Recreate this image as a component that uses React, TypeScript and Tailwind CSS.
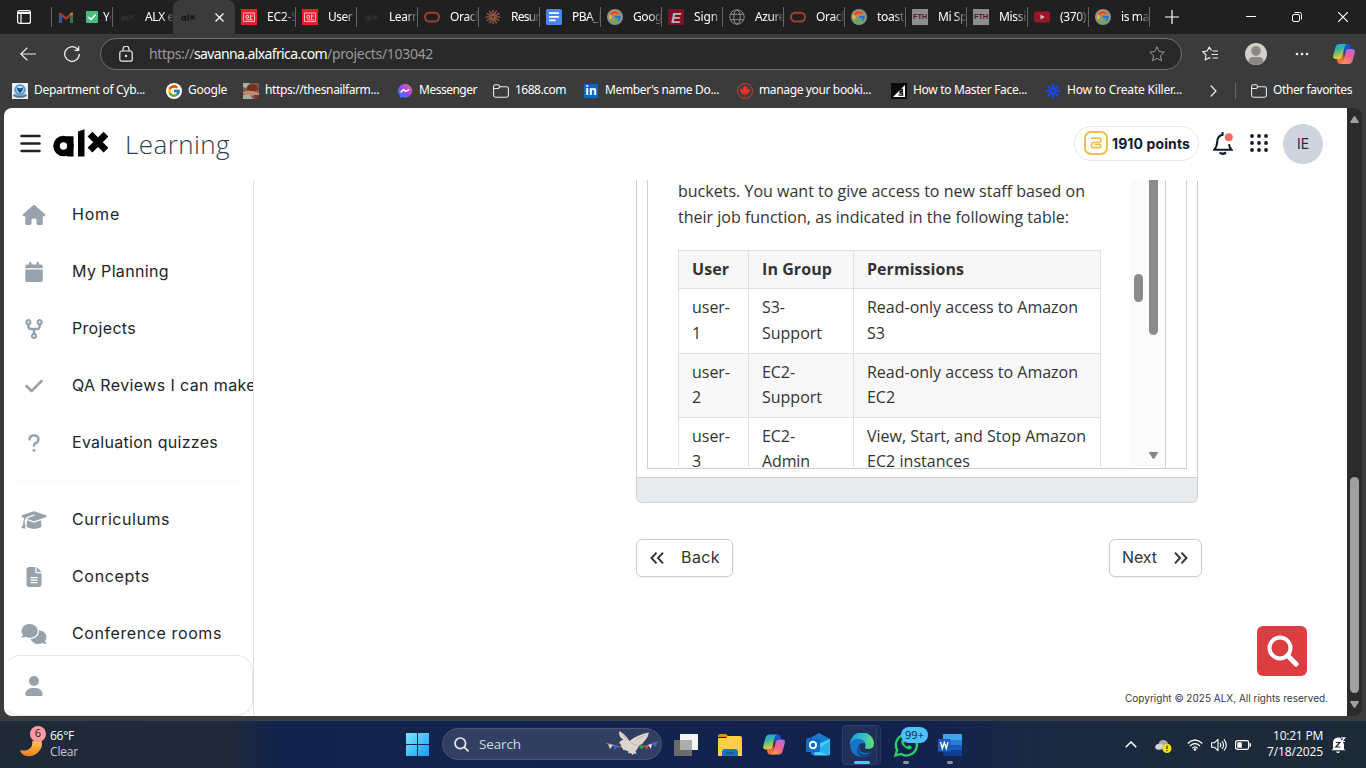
import { useLayoutEffect, useRef, type ReactNode } from "react";
import {
  FaHouse, FaCalendar, FaCodeFork, FaCheck, FaQuestion, FaGraduationCap,
  FaFileLines, FaComments, FaUser,
} from "react-icons/fa6";
import { FcGoogle } from "react-icons/fc";
import { FaCanadianMapleLeaf } from "react-icons/fa";

/* One line of text whose tracking is adjusted so that it spans `w` pixels. */
function Line({ w, className = "", children }: { w: number; className?: string; children: string }) {
  const ref = useRef<HTMLSpanElement>(null);
  useLayoutEffect(() => {
    const el = ref.current;
    if (!el) return;
    el.style.letterSpacing = "0px";
    const natural = el.getBoundingClientRect().width;
    el.style.letterSpacing = `${(w - natural) / children.length}px`;
  }, [w, children]);
  return <span ref={ref} className={`inline-block shrink-0 whitespace-pre ${className}`}>{children}</span>;
}

/* ---------- small drawings ---------- */

function AlxMark({ className = "" }: { className?: string }) {
  return (
    <svg viewBox="0 0 55 28" className={className} fill="none" stroke="currentColor">
      <circle cx="10.5" cy="17" r="7" strokeWidth="6.6" />
      <path d="M17.3 7.3v20.3" strokeWidth="6.4" />
      <path d="M25 2.5 31.5.3v27.3H25z" fill="currentColor" stroke="none" />
      <path d="m37 5.200 16 16M53 5.200l-16 16" strokeWidth="6.8" />
    </svg>
  );
}

const Oracle = () => (
  <svg viewBox="0 0 16 16" className="size-4"><rect x="1" y="3.7" width="14" height="8.8" rx="4.4" fill="none" stroke="#9a4236" strokeWidth="2" /></svg>
);
const Board = () => (
  <svg viewBox="0 0 16 16" className="size-4">
    <rect width="16" height="16" fill="#e0222e" />
    <path d="M2.500 4h11v8.500h-11zM5 6.500h2.500V9H5zM9.500 5.500v5M9.500 7H12M5 10.800h7" fill="none" stroke="#ffb9bd" strokeWidth="1" />
  </svg>
);
const Burst = ({ className = "text-[#9c5a42]", n = 12, sw = 1.3 }: { className?: string; n?: number; sw?: number }) => (
  <svg viewBox="0 0 16 16" className={`size-4 ${className}`} stroke="currentColor" strokeWidth={sw}>
    {Array.from({ length: n }, (_, i) => (
      <path key={i} d="M8 7V.7" transform={`rotate(${(i * 360) / n} 8 8)`} />
    ))}
  </svg>
);
const Docs = () => (
  <svg viewBox="0 0 16 16" className="size-4">
    <rect width="16" height="16" rx="1.5" fill="#4486f4" />
    <path d="M3 4.2h10M3 7.8h10M3 11.4h6.5" stroke="#fff" strokeWidth="1.7" />
  </svg>
);
const GoogleTab = () => (
  <span className="flex size-4 items-center justify-center rounded-full bg-[#8f8f8f]"><FcGoogle className="size-3.5" /></span>
);
const ETab = () => (
  <span className="flex size-4 items-center justify-center bg-[#7c1128] font-['Liberation_Sans'] text-[15px] leading-none font-bold text-[#b9b3b4] italic">E</span>
);
const Globe = () => (
  <svg viewBox="0 0 16 16" className="size-4" fill="none" stroke="#8d8d8d">
    <circle cx="8" cy="8" r="7.2" /><ellipse cx="8" cy="8" rx="3.2" ry="7.2" /><path d="M1.5 5.3h13M1.5 10.7h13" />
  </svg>
);
const Fth = () => (
  <span className="flex size-4 items-center justify-center bg-[#8e8e8e] font-['Liberation_Sans'] text-[7.500px] leading-none font-bold tracking-tight text-[#5c1420]">FTH</span>
);
const Youtube = () => (
  <svg viewBox="0 0 16 16" className="size-4"><rect y="2.5" width="16" height="11" rx="2.5" fill="#9c1528" /><path d="M6.5 5.5v5L10.7 8z" fill="#c8c8c8" /></svg>
);
const Gmail = () => (
  <svg viewBox="0 0 14 11" className="h-[11px] w-[14px]">
    <path d="M0 2v9h3V5z" fill="#2f5c9c" /><path d="M14 2v9h-3V5z" fill="#2c7d43" />
    <path d="M0 .8h2L7 5l5-4.200h2v2L7 8 0 2.800z" fill="#a13a32" /><path d="M11 3.500V.8h3v2z" fill="#ad862c" />
  </svg>
);
const CheckBox = () => (
  <svg viewBox="0 0 12 12" className="size-3"><rect width="12" height="12" rx="1" fill="#45c07c" /><path d="m2.500 6 2.500 2.600 4.700-5" stroke="#fff" strokeWidth="1.500" fill="none" /></svg>
);
const Folder = () => (
  <svg viewBox="0 0 16 16" className="size-4" fill="none" stroke="#e8e8e8" strokeWidth="1.1">
    <path d="M.6 3.600A1.900 1.900 0 0 1 2.500 1.700h2.700l2 2h6.300a1.900 1.900 0 0 1 1.900 1.900v6.700a1.900 1.900 0 0 1-1.900 1.900h-11a1.900 1.900 0 0 1-1.900-1.900zM.6 5.500h4.800l1.800-1.800" />
  </svg>
);
const Messenger = () => (
  <svg viewBox="0 0 16 16" className="size-4">
    <defs><linearGradient id="msg" x1="0" y1="1" x2="1" y2="0"><stop stopColor="#0b8bff" /><stop offset=".5" stopColor="#9b45fb" /><stop offset="1" stopColor="#ff6a70" /></linearGradient></defs>
    <path d="M8 1a7 6.800 0 0 0-5.200 11.400v2.400l2.300-.9A7 6.800 0 1 0 8 1z" fill="url(#msg)" />
    <path d="m3.700 9.500 2.700-2.900 2.300 1.800 3.300-1.800" fill="none" stroke="#fff" strokeWidth="1.500" />
  </svg>
);
const Crest = () => (
  <svg viewBox="0 0 16 16" className="size-4">
    <rect width="16" height="16" fill="#e8eff5" /><circle cx="8" cy="7" r="5.800" fill="#5a9bd0" /><circle cx="8" cy="6.500" r="3.600" fill="#cfe2f1" />
    <path d="M5 4.500q3 1.500 6 0 0 4-3 5.500-3-1.500-3-5.500z" fill="#1c4f8c" /><path d="M1.500 12q6.500 3.500 13 0" stroke="#5b6f86" strokeWidth="2" fill="none" />
  </svg>
);
const Snail = () => (
  <svg viewBox="0 0 16 16" className="size-4">
    <rect width="16" height="16" fill="#7b5a4a" /><path d="M0 0h7L3 5 0 4z" fill="#9fb0a5" /><ellipse cx="9.500" cy="5" rx="5.500" ry="3.500" fill="#7a2f1d" />
    <path d="M0 9q7-3 16 1v2Q8 14 0 11z" fill="#c08a72" /><path d="M0 12h7l3 4H0z" fill="#a9aba0" /><path d="M11 12h5v4h-4z" fill="#6d3b2c" />
  </svg>
);
const Maple = () => (
  <span className="flex size-4 items-center justify-center rounded-full border border-[#d23a30]"><FaCanadianMapleLeaf className="size-3 text-[#f0322a]" /></span>
);
const Sail = () => (
  <svg viewBox="0 0 16 16" className="size-4"><rect width="16" height="16" fill="#0a0a0a" /><path d="M14 2v12H2z" fill="#fff" /><path d="M8 6.500h3.300v2H9v1.700h2.600v2H7.500" stroke="#0a0a0a" fill="none" strokeWidth="1.300" /></svg>
);

function Copilot({ id, className }: { id: string; className: string }) {
  return (
    <svg viewBox="0 0 22 20" className={className}>
      <defs>
        <linearGradient id={id + "a"} x1="0" y1="0" x2=".3" y2="1"><stop stopColor="#1ea0f5" /><stop offset=".45" stopColor="#37b5a0" /><stop offset="1" stopColor="#f7d021" /></linearGradient>
        <linearGradient id={id + "b"} x1=".8" y1="0" x2=".2" y2="1"><stop stopColor="#b06cf2" /><stop offset=".5" stopColor="#f0608c" /><stop offset="1" stopColor="#ff9a4a" /></linearGradient>
      </defs>
      <path d="M11 0h4q1.800 0 2.500 2l.8 3h-3q-2 0-2.700 2l-1 4z" fill="#1553d0" />
      <path d="M6.500 0H14q-1.600.4-2.200 2.500L9.300 12.500Q8.700 15 6.500 15H3Q-.5 15 .2 11.500L2.500 3Q3.500 0 6.500 0z" fill={`url(#${id}a)`} />
      <path d="M11 20H7q-1.800 0-2.500-2l-.8-3h3q2 0 2.700-2l1-4z" fill="#f7704c" />
      <path d="M15.500 20H8q1.600-.4 2.200-2.500L12.700 7.500q.6-2.500 2.800-2.500H19q3.500 0 2.800 3.500L19.500 17q-1 3-4 3z" fill={`url(#${id}b)`} />
    </svg>
  );
}

/* ---------- browser chrome ---------- */

const alxDim = <AlxMark className="mt-px h-[7px] w-[13px] text-[#303030]" />;
const tabs: { icon: ReactNode; text: string; w: number }[] = [
  { icon: <Board />, text: "EC2-S", w: 31 },
  { icon: <Board />, text: "User ", w: 27 },
  { icon: alxDim, text: "Learn", w: 30 },
  { icon: <Oracle />, text: "Oracl", w: 28 },
  { icon: <Burst />, text: "Resum", w: 35 },
  { icon: <Docs />, text: "PBA_L", w: 32 },
  { icon: <GoogleTab />, text: "Goog", w: 29 },
  { icon: <ETab />, text: "Sign i", w: 30 },
  { icon: <Globe />, text: "Azure", w: 30 },
  { icon: <Oracle />, text: "Oracl", w: 28 },
  { icon: <GoogleTab />, text: "toast", w: 27 },
  { icon: <Fth />, text: "Mi Sp", w: 29 },
  { icon: <Fth />, text: "Missi", w: 27 },
  { icon: <Youtube />, text: "(370)", w: 26 },
  { icon: <GoogleTab />, text: "is mak", w: 34 },
];

const fade = "overflow-hidden [mask-image:linear-gradient(to_right,black_60%,transparent_105%)]";

function TabStrip() {
  return (
    <div className="flex h-[34px] items-center bg-[#202020] text-[12px] text-white">
      <div className="flex w-[51px] justify-end pr-5">
        <svg viewBox="0 0 14 14" className="size-3.5" fill="none" stroke="#fff" strokeWidth="1.200">
          <rect x=".6" y=".6" width="12.800" height="12.800" rx="2" /><path d="M1 3h12" strokeWidth="2" /><path d="M4 3v10" />
        </svg>
      </div>
      <div className="flex h-5 w-[62px] items-center border-x border-[#666] pl-[7px]">
        <Gmail />
        <span className="mr-[5px] ml-[13px]"><CheckBox /></span>
        <span className={`w-2 ${fade}`}><Line w={14}>Yo</Line></span>
      </div>
      <div className="flex h-5 w-[60px] items-center pl-2">
        {alxDim}
        <span className={`ml-[11px] w-7 ${fade}`}><Line w={29}>ALX e</Line></span>
      </div>
      <div className="flex h-[34px] w-[62px] items-center rounded-t-lg bg-[#3b3b3b] pl-2">
        <AlxMark className="h-[7px] w-[14px] text-[#151b1b]" />
        <svg viewBox="0 0 9 9" className="ml-5 size-[9px]" stroke="#fff" strokeWidth="1.200"><path d="m.5.5 8 8M8.500.5l-8 8" /></svg>
      </div>
      {tabs.map((t, i) => (
        <div key={i} className="flex h-5 w-[61px] items-center border-r border-[#666] pl-1.5">
          <span className="flex w-4 justify-center">{t.icon}</span>
          <span className={`ml-2.5 w-7 ${fade}`}><Line w={t.w}>{t.text}</Line></span>
        </div>
      ))}
      <svg viewBox="0 0 14 14" className="ml-[15px] size-3.5" stroke="#fff" strokeWidth="1.200"><path d="M7 0v14M0 7h14" /></svg>
      <svg viewBox="0 0 10 10" className="ml-[67px] size-2.5" stroke="#fff"><path d="M0 4.500h10" /></svg>
      <svg viewBox="0 0 10 10" className="ml-9 size-2.5" stroke="#fff" fill="none"><rect x=".5" y="2.500" width="7" height="7" rx="1.500" /><path d="M2.500.5h5a2 2 0 0 1 2 2v5" /></svg>
      <svg viewBox="0 0 10 10" className="ml-9 size-2.5" stroke="#fff" strokeWidth="1.200"><path d="m0 0 10 10M10 0 0 10" /></svg>
    </div>
  );
}

function Toolbar() {
  return (
    <div className="flex h-10 items-center pl-5">
      <svg viewBox="0 0 16 14" className="h-3.5 w-4" fill="none" stroke="#eee" strokeWidth="1.200"><path d="M16 7H1M7.300.7.800 7l6.500 6.300" /></svg>
      <svg viewBox="0 0 16 16" className="ml-7 size-4" fill="none" stroke="#eee" strokeWidth="1.300"><path d="M15.300 8a7.300 7.300 0 1 1-2.500-5.500l1.700 1.700M14.600.3v4h-4" /></svg>
      <div className="ml-5 flex h-8 w-[1082px] items-center rounded-full border border-[#6e6e6e] bg-[#292929] pr-4 pl-[18px]">
        <svg viewBox="0 0 14 16" className="h-4 w-3.5" fill="none" stroke="#eee" strokeWidth="1.200"><rect x=".8" y="5" width="12.400" height="10.200" rx="2" /><path d="M4 5V3.200a3 3 0 0 1 6 0V5" /><circle cx="7" cy="10" r=".6" fill="#eee" /></svg>
        <span className="ml-4 flex pb-px text-[14px] text-[#999]">
          <Line w={45}>https://</Line><Line w={133} className="text-white">savanna.alxafrica.com</Line><Line w={106}>/projects/103042</Line>
        </span>
        <svg viewBox="0 0 16 16" className="ml-auto size-4" fill="none" stroke="#999"><path d="m8 .8 2.200 4.700 5 .7-3.700 3.500 1 5.100L8 12.300l-4.500 2.500 1-5.100L.8 6.200l5-.7z" strokeLinejoin="round" /></svg>
      </div>
      <svg viewBox="0 0 16 16" className="ml-5 size-4" fill="none" stroke="#eee" strokeWidth="1.200"><path d="M9.500 4.500 7.300 1 5.200 5 .8 5.700l3.200 3.300-.8 5 4-2.200 1.200.6M10.500 5H16M9.500 8.500H16M10.500 12H16" strokeLinejoin="round" /></svg>
      <svg viewBox="0 0 22 22" className="ml-[27px] size-[22px]"><circle cx="11" cy="11" r="11" fill="#d2cfcb" /><circle cx="11" cy="8" r="4.800" fill="#8c8985" /><path d="M3.500 18.500Q4 14 8 14h6q4 0 4.500 4.500-3 3.500-7.500 3.500t-7.500-3.500z" fill="#8c8985" /></svg>
      <svg viewBox="0 0 14 4" className="ml-7 h-1 w-3.5" fill="#eee"><circle cx="2" cy="2" r="1.300" /><circle cx="7" cy="2" r="1.300" /><circle cx="12" cy="2" r="1.300" /></svg>
      <Copilot id="tb" className="ml-6 h-5 w-[22px]" />
    </div>
  );
}

const bookmarks: { icon: ReactNode; text: string; w: number; box: string }[] = [
  { icon: <Crest />, text: "Department of Cyb...", w: 111, box: "w-[154px]" },
  { icon: <span className="flex size-4 items-center justify-center rounded-full bg-white"><FcGoogle className="size-3.5" /></span>, text: "Google", w: 39, box: "w-[77px]" },
  { icon: <Snail />, text: "https://thesnailfarm...", w: 114, box: "w-[154px]" },
  { icon: <Messenger />, text: "Messenger", w: 58, box: "w-[96px]" },
  { icon: <Folder />, text: "1688.com", w: 51, box: "w-[90px]" },
  { icon: <span className="flex size-3.5 items-center justify-center bg-[#0a66c2] text-[12px] leading-none font-bold">in</span>, text: "Member's name Do...", w: 114, box: "w-[154px]" },
  { icon: <Maple />, text: "manage your booki...", w: 112, box: "w-[154px]" },
  { icon: <Sail />, text: "How to Master Face...", w: 114, box: "w-[154px]" },
  { icon: <Burst className="text-[#1c46e0]" n={8} sw={2.3} />, text: "How to Create Killer...", w: 115, box: "w-[165px]" },
];

function Bookmarks() {
  return (
    <div className="flex h-[34px] items-center pl-3 text-[12px] text-white">
      {bookmarks.map((b) => (
        <div key={b.text} className={`flex shrink-0 items-center gap-1.5 ${b.box}`}>
          <span className="flex w-4 justify-center">{b.icon}</span><Line w={b.w} className="pb-0.5">{b.text}</Line>
        </div>
      ))}
      <svg viewBox="0 0 7 12" className="h-3 w-[7px]" fill="none" stroke="#eee" strokeWidth="1.200"><path d="m.7.5 5.300 5.500L.7 11.500" /></svg>
      <div className="mr-[15px] ml-[18px] h-4 w-px bg-[#666]" />
      <Folder />
      <Line w={79} className="ml-1.5 pb-0.5">Other favorites</Line>
    </div>
  );
}

/* ---------- page ---------- */

function Header() {
  return (
    <header className="flex h-[72px] shrink-0 items-center pb-0.5 pl-4">
      <svg viewBox="0 0 21 19" className="h-[19px] w-[21px]" stroke="#1f2328" strokeWidth="2.500" strokeLinecap="round"><path d="M1.500 2h18M1.500 9.500h18M1.500 17h18" /></svg>
      <AlxMark className="ml-3 h-7 w-[55px] text-black" />
      <Line w={105} className="mt-0.5 ml-[17px] font-['Open_Sans'] text-[26px] font-light text-[#2f3d54]">Learning</Line>
      <div className="ml-auto flex h-[35px] w-[125px] items-center rounded-full border border-[#e5e7ea] pl-[9px] text-[#0f1b2d]">
        <svg viewBox="0 0 24 24" className="size-6" fill="none" stroke="#f5bc45"><rect x="1" y="1" width="22" height="22" rx="6" strokeWidth="2" /><path d="M7 7.200h8.500q1.200 0 1.200 1.200v1.800q0 1.300-1.300 1.300H9q-1.500 0-1.500 1.500v2.300q0 1.400 1.400 1.400h6.400q1.400 0 1.400-1.400v-.9q0-.9-.9-.9H10.500" strokeWidth="1.700" strokeLinejoin="round" /></svg>
        <Line w={78} className="ml-1 font-['Inter'] text-[14px] font-bold">1910 points</Line>
      </div>
      <svg viewBox="0 0 20 23" className="ml-3.5 h-[23px] w-5" fill="none" stroke="#0f1b2d" strokeWidth="2"><path d="M10.500 2.800Q4.800 3 4.300 9q-.2 5.500-3 8.700h17.200q-2-2.200-2.600-5.500" /><path d="M6.500 20.500q3.200 2.500 6.500 0" strokeWidth="2.200" /><path d="M9.500 0v2.500" /><circle cx="15.800" cy="5.200" r="4" fill="#ff6b5e" stroke="none" /></svg>
      <svg viewBox="0 0 18 18" className="ml-[17px] size-[18px]" fill="#0f1b2d">{[2, 9, 16].map((y) => [2, 9, 16].map((x) => <circle key={`${x}-${y}`} cx={x} cy={y} r="1.900" />))}</svg>
      <div className="mt-0.5 mr-6 ml-[15px] flex size-10 items-center justify-center rounded-full bg-[#cfd3dd] pb-px font-['Inter'] text-[14px] text-[#252b38]">IE</div>
    </header>
  );
}

const nav = [
  { Icon: FaHouse, text: "Home", w: 48 },
  { Icon: FaCalendar, text: "My Planning", w: 97 },
  { Icon: FaCodeFork, text: "Projects", w: 64 },
  { Icon: FaCheck, text: "QA Reviews I can make", w: 184 },
  { Icon: FaQuestion, text: "Evaluation quizzes", w: 146 },
];
const nav2 = [
  { Icon: FaGraduationCap, text: "Curriculums", w: 98 },
  { Icon: FaFileLines, text: "Concepts", w: 78 },
  { Icon: FaComments, text: "Conference rooms", w: 150 },
];

function NavRow({ Icon, text, w }: (typeof nav)[number]) {
  return (
    <a className="flex h-[57px] items-center overflow-hidden">
      <span className="flex w-[60px] shrink-0 justify-center text-[#98a2ad]"><Icon className="h-5 w-[26px]" /></span>
      <Line w={w} className="ml-2 pb-0.5 font-['Inter'] text-[16px] text-[#212529]">{text}</Line>
    </a>
  );
}

function Sidebar() {
  return (
    <aside className="flex w-[250px] shrink-0 flex-col border-r border-[#dee2e6]">
      <div className="h-[475px] overflow-hidden pt-1.5">
        {nav.map((n) => <NavRow key={n.text} {...n} />)}
        <hr className="mx-2 mt-2.5 mb-[9px] border-[#f9f9fa]" />
        {nav2.map((n) => <NavRow key={n.text} {...n} />)}
      </div>
      <div className="flex grow items-center rounded-2xl border border-[#e3e5e8] border-l-transparent">
        <span className="-ml-px flex w-[60px] justify-center text-[#98a2ad]"><FaUser className="h-5 w-[26px]" /></span>
      </div>
    </aside>
  );
}

const rows: { cells: [string, number][][] }[] = [
  { cells: [[["user-", 38], ["1", 9]], [["S3-", 23], ["Support", 60]], [["Read-only access to Amazon", 211], ["S3", 18]]] },
  { cells: [[["user-", 38], ["2", 9]], [["EC2-", 33], ["Support", 60]], [["Read-only access to Amazon", 211], ["EC2", 28]]] },
  { cells: [[["user-", 38], ["3", 9]], [["EC2-", 33], ["Admin", 48]], [["View, Start, and Stop Amazon", 219], ["EC2 instances", 103]]] },
];

function Lab() {
  return (
    <div className="h-[323px] w-[562px] overflow-hidden rounded-b-md border border-t-0 border-[#cbcdcf]">
      <div className="h-[297px] px-2.5">
        <div className="flex h-[289px] border-x border-b border-[#cfcfcf]">
          <div className="flex w-[518px] border-r border-[#cfcfcf]">
            <div className="h-[287px] w-[483px] overflow-hidden pl-[30px] font-['Open_Sans'] text-[16px] leading-[25.600px] text-[#333]">
              <p className="-mt-[0.800px]">
                <Line w={407} className="block">buckets. You want to give access to new staff based on</Line>
                <Line w={391} className="block">their job function, as indicated in the following table:</Line>
              </p>
              <table className="mt-[19.500px] w-[423px] table-fixed border-collapse">
                <thead>
                  <tr className="bg-[#f7f7f7] text-left font-bold">
                    <th className="w-[70px] border border-[#dfe2e5] px-[13px] py-1.5"><Line w={37} className="block w-fit">User</Line></th>
                    <th className="w-[105px] border border-[#dfe2e5] px-[13px] py-1.5"><Line w={70} className="block w-fit">In Group</Line></th>
                    <th className="border border-[#dfe2e5] px-[13px] py-1.5"><Line w={97} className="block w-fit">Permissions</Line></th>
                  </tr>
                </thead>
                <tbody>
                  {rows.map((r, i) => (
                    <tr key={i} className="even:bg-[#f8f8f8]">
                      {r.cells.map((c, j) => (
                        <td key={j} className="border border-[#dfe2e5] px-[13px] py-1.5">
                          {c.map(([t, w]) => <Line key={t} w={w} className="block w-fit">{t}</Line>)}
                        </td>
                      ))}
                    </tr>
                  ))}
                </tbody>
              </table>
            </div>
            <div className="h-[287px] w-[15px] bg-[#fbfbfb] pt-[94px] pl-[3px]"><div className="h-7 w-[9px] rounded-full bg-[#8b8b8b]" /></div>
            <div className="flex h-[287px] w-[15px] flex-col items-center justify-between bg-[#fbfbfb] pb-2">
              <div className="h-[155px] w-[9px] rounded-b-full bg-[#8b8b8b]" />
              <svg viewBox="0 0 9 7" className="h-[7px] w-[9px]" fill="#858585"><path d="M.8 0h7.400q1.200 0 .5 1.200L5.500 6.300q-1 1.200-2 0L.3 1.200Q-.3 0 .8 0z" /></svg>
            </div>
          </div>
        </div>
      </div>
      <div className="h-[26px] border-t border-[#cbcdcf] bg-[#e8ebee]" />
    </div>
  );
}

const Chevrons = ({ className = "" }: { className?: string }) => (
  <svg viewBox="0 0 14 12" className={`h-3 w-3.5 ${className}`} fill="none" stroke="#333" strokeWidth="1.900"><path d="m1 .7 5 5.300-5 5.300M7.500.7l5 5.300-5 5.300" /></svg>
);

function Content() {
  return (
    <main className="flex grow flex-col pl-[382px]">
      <Lab />
      <div className="mt-9 flex w-[566px] justify-between font-['Inter'] text-[16px] text-[#333]">
        <button className="flex h-[38px] w-[97px] items-center rounded-md border border-[#ccc] pl-[13px] shadow-xs"><Chevrons className="rotate-180" /><Line w={39} className="ml-[17px] pb-0.5">Back</Line></button>
        <button className="flex h-[38px] w-[93px] items-center rounded-md border border-[#ccc] pl-3 shadow-xs"><Line w={35} className="pb-0.5">Next</Line><Chevrons className="ml-[17px]" /></button>
      </div>
      <div className="mt-[49px] mr-10 flex size-[50px] items-center justify-center self-end rounded-md bg-[#dc3d40] pl-0.5">
        <svg viewBox="0 0 32 32" className="size-8" fill="none" stroke="#fff" strokeWidth="4"><circle cx="13" cy="13" r="10.500" /><path d="m20.500 20.500 8.500 8.500" strokeWidth="5" strokeLinecap="round" /></svg>
      </div>
      <div className="mt-[15px] mr-[19px] flex self-end font-['Inter'] text-[10px] leading-[14px] text-[#333a45]"><Line w={203}>Copyright © 2025 ALX, All rights reserved.</Line></div>
    </main>
  );
}

function PageScrollbar() {
  return (
    <div className="flex w-[15px] flex-col items-center rounded-r-lg bg-[#2b2b2b] py-2">
      <svg viewBox="0 0 9 7" className="h-[7px] w-[9px]" fill="#a0a0a0"><path d="M.8 7h7.400q1.200 0 .5-1.200L5.500.7q-1-1.200-2 0L.3 5.800Q-.3 7 .8 7z" /></svg>
      <div className="mt-auto h-[216px] w-[9px] rounded-full bg-[#9f9f9f]" />
      <svg viewBox="0 0 9 7" className="mt-2 h-[7px] w-[9px]" fill="#a0a0a0"><path d="M.8 0h7.400q1.200 0 .5 1.200L5.500 6.300q-1 1.200-2 0L.3 1.200Q-.3 0 .8 0z" /></svg>
    </div>
  );
}

/* ---------- taskbar ---------- */

const Cell = ({ children, mark = "" }: { children: ReactNode; mark?: string }) => (
  <div className="relative flex h-[47px] w-11 items-center justify-center">
    {children}
    {mark && <span className={`absolute bottom-1 h-[3px] rounded-full ${mark}`} />}
  </div>
);

function Dove() {
  return (
    <svg viewBox="0 0 52 26" className="h-[26px] w-[52px]">
      <path d="M0 12q26 10 52-1" stroke="#9aa0ad" fill="none" strokeWidth=".7" />
      <path d="m2 13 5 1-3 4z" fill="#d9d5cf" /><path d="m7 14 5 1-3 4z" fill="#3b62e8" /><path d="m15 15 5 0-2 5z" fill="#f0b429" />
      <path d="m33 15 5-1-2 5z" fill="#2ba84a" /><path d="m38 15 5-1-2 5z" fill="#e8402e" /><path d="m42 14 4-1-1 5z" fill="#ddd" /><path d="m46 13 5-2-1 5z" fill="#3b62e8" />
      <path d="M13.500 12q1-3.500 4-3Q11.500 4.500 13.500 0q6 3.500 10 10Q31 3.500 43 1.500q-1 5-4 8-2.500 4-6.500 5.500-1 4-3 5l1 3-2.500-.5-1.500 1.500-1.500-2-2.500.5-.5-2.500q-6-1-7-6z" fill="#dcd5cf" />
      <path d="M24 11q3 3 7 3M17 4l5 6M30 9l9-5" stroke="#b5adaf" fill="none" strokeWidth=".8" />
      <path d="m12 12 2-1v2z" fill="#e0653a" />
    </svg>
  );
}

function Taskbar() {
  return (
    <footer className="flex h-12 border-t border-[#35404f] bg-[linear-gradient(to_right,#1f2a37_0%,#20293a_17%,#13244c_20%,#12224e_68%,#1a2942_76%,#1d2a36_100%)] font-['Open_Sans'] text-[12px] text-white">
      <div className="flex w-[395px] items-center pl-5">
        <div className="relative h-[30px] w-[26px]">
          <svg viewBox="0 0 24 24" className="mt-2.5 h-[18px] w-[22px]" preserveAspectRatio="none"><defs><linearGradient id="moon" x2="0" y2="1"><stop stopColor="#ffc75a" /><stop offset="1" stopColor="#f08018" /></linearGradient></defs><path d="M23 0q3 9-3 16-4 6-11 5.500Q2 21 0 13.500q8 2 12-4Q14 6 13 2z" fill="url(#moon)" /></svg>
          <span className="absolute -top-1 left-2.5 flex size-4 items-center justify-center rounded-full bg-[#ff99a4] text-[11px] text-[#222]">6</span>
        </div>
        <div className="ml-1 flex flex-col pb-0.5 leading-4"><Line w={24} className="self-start">66°F</Line><Line w={28} className="self-start text-[#c8ccd2]">Clear</Line></div>
      </div>
      <div className="flex w-[47px] items-center pl-[11px]">
        <svg viewBox="0 0 23 23" className="size-[23px]"><defs><linearGradient id="win" x2="1" y2="1"><stop stopColor="#7ee7ff" /><stop offset="1" stopColor="#149cf7" /></linearGradient></defs><path d="M0 0h11v11H0zM12 0h11v11H12zM0 12h11v11H0zM12 12h11v11H12z" fill="url(#win)" /></svg>
      </div>
      <div className="mt-[7px] mr-0.5 flex h-8 w-[220px] items-center rounded-full border border-[#45557b] bg-[#313f63] pr-[3px] pl-[11px]">
        <svg viewBox="0 0 15 15" className="size-[15px]" fill="none" stroke="#e5e8ef" strokeWidth="1.700"><circle cx="6.300" cy="6.300" r="5.300" /><path d="m10.200 10.200 4.300 4.300" /></svg>
        <Line w={42} className="ml-2.5 text-[13.500px] text-[#d3d8e3]">Search</Line>
        <span className="ml-auto"><Dove /></span>
      </div>
      <Cell><svg viewBox="0 0 24 22" className="h-[22px] w-6"><rect x="6" width="18" height="16" fill="#f3f3f3" /><rect y="6" width="18" height="16" fill="#6b6b6b" /><rect x="6" y="6" width="12" height="10" fill="#adadad" /></svg></Cell>
      <Cell><svg viewBox="0 0 24 22" className="h-[22px] w-6"><path d="M0 2q0-2 2-2h6l3 3H0z" fill="#d99106" /><path d="M0 4h8l2-2h12q2 0 2 2v18H0z" fill="#ffcf4b" /><path d="M4 22v-4q0-3 3-3h10q3 0 3 3v4z" fill="#1674c4" /><path d="M8 19h8" stroke="#0c4f91" strokeWidth="1.500" /></svg></Cell>
      <Cell><Copilot id="task" className="h-[21px] w-[22px]" /></Cell>
      <Cell><svg viewBox="0 0 24 23" className="h-[23px] w-6"><path d="m4 5 9-5 11 6v14q0 2-2 2H8q-3 0-3-2z" fill="#167bd1" /><path d="m10 12 14-6v14q0 2.500-2 2.500H8z" fill="#45d0f5" /><path d="m24 8-14 9 13 5.500z" fill="#24b0ea" /><rect y="5" width="14" height="14" rx="1.500" fill="#0f6cc5" /><circle cx="7" cy="12" r="3.200" fill="none" stroke="#fff" strokeWidth="1.900" /></svg></Cell>
      <Cell mark="w-4 bg-[#4cc2ff]">
        <span className="absolute top-1 left-1 h-10 w-[37px] rounded border border-[#2a3962] bg-[#1a2a55]" />
        <span className="absolute top-1 left-0.5 flex h-10 w-[35px] items-center justify-center rounded border border-[#303f67] bg-[#213058]" />
        <svg viewBox="0 0 24 24" className="relative size-6"><defs><linearGradient id="e1" x2="1"><stop stopColor="#1b9de2" /><stop offset=".6" stopColor="#35c1c5" /><stop offset="1" stopColor="#6be05a" /></linearGradient></defs>
          <path d="M0 12A12 12 0 0 1 24 10.500q0 5-5.500 5.500-4 0-3.500-2 1-1.500 0-4-2-3.500-7-3Q2 8 0 12z" fill="url(#e1)" />
          <path d="M0 12q1-6 8-6 6 0 7 4.500Q9.500 9 9 13.500q0 6 7 6.500 3 0 5.500-1.500Q18 24 12 24 1 23.500 0 12z" fill="#1573c8" /><path d="M9 11.500q-2 5 2 8.500 4.500 3 10.500-1.500Q18 24 12 24q-8-3-3-12.500z" fill="#0c4596" />
        </svg>
      </Cell>
      <Cell mark="w-1.5 bg-[#8d94a8]">
        <svg viewBox="0 0 24 24" className="size-6" fill="none" stroke="#26d366" strokeWidth="2.300"><path d="m1.500 22.500 1.600-5.600A10.500 10.500 0 1 1 7 21z" /><path d="M8 7q-2 2 1.500 6t7 3q2-2 0-3l-2-.5-1 1.500q-3-1-4-4l1-1-.8-2z" fill="#26d366" strokeWidth=".5" /></svg>
        <span className="absolute top-1.5 left-[17px] flex h-4 w-[27px] items-center justify-center rounded-full bg-[#4cc2ff] text-[11px] text-[#102030]">99+</span>
      </Cell>
      <Cell mark="w-1.5 bg-[#8d94a8]"><svg viewBox="0 0 24 22" className="h-[22px] w-6"><path d="M6 0h17q1 0 1 1v5H5V1q0-1 1-1z" fill="#41a5ee" /><path d="M5 6h19v5H5z" fill="#2b7cd3" /><path d="M5 11h19v5H5z" fill="#185abd" /><path d="M5 16h19v5q0 1-1 1H6q-1 0-1-1z" fill="#103f91" /><rect y="5" width="12.500" height="12.500" rx="1" fill="#185abd" /><path d="m2.500 8 1.800 6.500L6.300 8.500l2 6L10 8" fill="none" stroke="#fff" strokeWidth="1.400" /></svg></Cell>
      <div className="ml-auto flex items-center pr-5">
        <svg viewBox="0 0 12 7" className="h-[7px] w-3" fill="none" stroke="#fff" strokeWidth="1.500"><path d="m.7 6.300L6 1l5.300 5.300" /></svg>
        <svg viewBox="0 0 17 14" className="mt-0.5 ml-[18px] h-3.5 w-[17px]"><path d="M3 10.500Q0 10 .3 7.500.7 5 3.500 5q1-4 4.500-4 3.500-.5 5 3.500 2 .5 2 3l-5 3z" fill="#a9abb0" /><path d="M3.500 5q3-1.500 5 1.500l-3 4H3Q0 10 .3 7.500.7 5 3.500 5z" fill="#d5d6d8" /><circle cx="12" cy="9.500" r="4.500" fill="#fde300" /><path d="M12 6.800v3.200M12 11v1.200" stroke="#222" strokeWidth="1.200" /></svg>
        <svg viewBox="0 0 16 12" className="ml-[15px] h-3 w-4" fill="none" stroke="#fff" strokeWidth="1.200"><path d="M.7 4.500Q8-2.500 15.300 4.500M3 7Q8 2 13 7M5.300 9.300q2.700-2.700 5.400 0" /><circle cx="8" cy="10.500" r="1.300" fill="#fff" stroke="none" /></svg>
        <svg viewBox="0 0 16 14" className="ml-2 h-3.5 w-4" fill="none" stroke="#fff" strokeWidth="1.100"><path d="M.6 4.800h2.700L7 1.300v11.400L3.300 9.200H.6zM9 4.700q1.500 2.300 0 4.600M11 3q3 4 0 8M13 1.300q4.500 5.700 0 11.400" strokeLinejoin="round" /></svg>
        <svg viewBox="0 0 16 10" className="ml-2 h-2.5 w-4" fill="none" stroke="#fff" strokeWidth="1.200"><rect x=".6" y=".6" width="13" height="8.800" rx="1.800" /><path d="M15.300 3.300v3.400" strokeWidth="1.400" /><path d="M2.300 2.300h4.500v5.400H2.300z" fill="#fff" stroke="none" /></svg>
        <div className="ml-4 flex w-14 flex-col items-end pb-0.5 leading-4"><Line w={50}>10:21 PM</Line><Line w={56}>7/18/2025</Line></div>
        <svg viewBox="0 0 15 16" className="ml-2 h-4 w-[15px]"><path d="M2 12V6q0-5 5-5.500h2L13 7v5l1.500 1.200H.5z" fill="#fff" /><path d="M5 14.500h4q-.5 1.500-2 1.500t-2-1.500z" fill="#fff" /><path d="M10.200.8h3.500L10.700 4.500H14" fill="none" stroke="#fff" strokeWidth="1.200" /><path d="M4.800 5.500h4l-4 4.500h4.300" fill="none" stroke="#1e2a37" strokeWidth="1.200" /></svg>
      </div>
    </footer>
  );
}

export default function App() {
  return (
    <div className="flex h-[768px] w-[1366px] flex-col overflow-hidden bg-[#3b3b3b] font-['Noto_Sans',sans-serif]">
      <TabStrip />
      <Toolbar />
      <Bookmarks />
      <div className="flex h-[608px] px-1">
        <div className="flex w-[1343px] flex-col overflow-hidden rounded-l-lg bg-white">
          <Header />
          <div className="flex min-h-0 grow"><Sidebar /><Content /></div>
        </div>
        <PageScrollbar />
      </div>
      <div className="h-1" />
      <Taskbar />
    </div>
  );
}
